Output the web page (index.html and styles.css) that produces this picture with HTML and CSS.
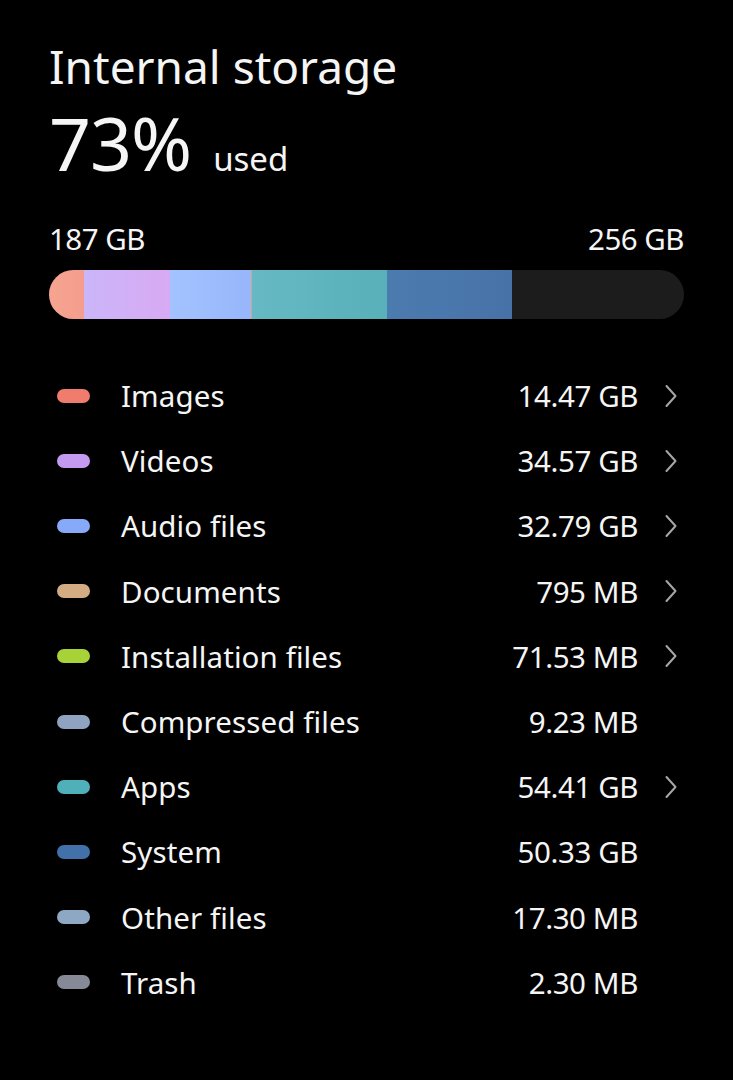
FILE: index.html
```html
<!DOCTYPE html>
<html>
<head>
<meta charset="utf-8">
<link rel="stylesheet" href="styles.css">
</head>
<body>
<div class="page">
  <h1 class="title">Internal storage</h1>
  <div class="usage"><span class="pct">73%</span><span class="used">used</span></div>
  <div class="caps"><span>187 GB</span><span>256 GB</span></div>
  <div class="bar">
    <div class="seg s-img"></div>
    <div class="seg s-vid"></div>
    <div class="seg s-aud"></div>
    <div class="seg s-doc"></div>
    <div class="seg s-app"></div>
    <div class="seg s-sys"></div>
  </div>
  <ul class="list">
    <li class="row"><span class="dot d-img"></span><span class="label">Images</span><span class="val">14.47 GB</span><span class="chev"><svg viewBox="0 0 12 24" width="12" height="24"><path d="M1.5 2 L10.5 12 L1.5 22" /></svg></span></li>
    <li class="row"><span class="dot d-vid"></span><span class="label">Videos</span><span class="val">34.57 GB</span><span class="chev"><svg viewBox="0 0 12 24" width="12" height="24"><path d="M1.5 2 L10.5 12 L1.5 22" /></svg></span></li>
    <li class="row"><span class="dot d-aud"></span><span class="label">Audio files</span><span class="val">32.79 GB</span><span class="chev"><svg viewBox="0 0 12 24" width="12" height="24"><path d="M1.5 2 L10.5 12 L1.5 22" /></svg></span></li>
    <li class="row"><span class="dot d-doc"></span><span class="label">Documents</span><span class="val">795 MB</span><span class="chev"><svg viewBox="0 0 12 24" width="12" height="24"><path d="M1.5 2 L10.5 12 L1.5 22" /></svg></span></li>
    <li class="row"><span class="dot d-ins"></span><span class="label">Installation files</span><span class="val">71.53 MB</span><span class="chev"><svg viewBox="0 0 12 24" width="12" height="24"><path d="M1.5 2 L10.5 12 L1.5 22" /></svg></span></li>
    <li class="row"><span class="dot d-cmp"></span><span class="label">Compressed files</span><span class="val">9.23 MB</span><span class="chev"></span></li>
    <li class="row"><span class="dot d-app"></span><span class="label">Apps</span><span class="val">54.41 GB</span><span class="chev"><svg viewBox="0 0 12 24" width="12" height="24"><path d="M1.5 2 L10.5 12 L1.5 22" /></svg></span></li>
    <li class="row"><span class="dot d-sys"></span><span class="label">System</span><span class="val">50.33 GB</span><span class="chev"></span></li>
    <li class="row"><span class="dot d-oth"></span><span class="label">Other files</span><span class="val">17.30 MB</span><span class="chev"></span></li>
    <li class="row"><span class="dot d-tr"></span><span class="label">Trash</span><span class="val">2.30 MB</span><span class="chev"></span></li>
  </ul>
</div>
</body>
</html>
```

FILE: styles.css
```css
html, body {
  margin: 0;
  padding: 0;
  background: #000;
}
body {
  font-family: "Noto Sans", "Open Sans", sans-serif;
  color: #f5f5f5;
  width: 733px;
  height: 1080px;
  overflow: hidden;
}
.page {
  padding: 36px 49px 0 49px;
}
.title {
  margin: 0;
  font-weight: 400;
  font-size: 46px;
  line-height: 60px;
  letter-spacing: 0;
}
.usage {
  display: flex;
  align-items: baseline;
  margin-top: 5px;
  height: 84px;
}
.pct {
  font-size: 73.5px;
  line-height: 84px;
  font-weight: 400;
  letter-spacing: -1px;
}
.used {
  font-size: 33px;
  margin-left: 22px;
}
.caps {
  display: flex;
  justify-content: space-between;
  font-size: 29.5px;
  line-height: 36px;
  margin-top: 36px;
  letter-spacing: -0.5px;
}
.bar {
  display: flex;
  height: 49px;
  margin-top: 13px;
  border-radius: 25px;
  overflow: hidden;
  background: #1c1c1c;
  width: 635px;
}
.seg { height: 100%; }
.s-img { width: 35px; background: linear-gradient(90deg, #f6a491, #f59d8c); }
.s-vid { width: 86px; background: linear-gradient(90deg, #cbb5f9, #d8aaf3); }
.s-aud { width: 81px; background: linear-gradient(90deg, #a3c3ff, #97b6fb); }
.s-doc { width: 1px; background: #c9ab8a; }
.s-app { width: 135px; background: linear-gradient(90deg, #66b9c2, #58b0b9); }
.s-sys { width: 125px; background: linear-gradient(90deg, #4c7bb0, #4772a8); }

.list {
  list-style: none;
  margin: 44px 0 0 0;
  padding: 0;
}
.row {
  display: flex;
  align-items: center;
  height: 65.2px;
}
.dot {
  width: 33px;
  height: 14px;
  border-radius: 7px;
  margin-left: 8px;
  flex: none;
}
.label {
  margin-left: 31px;
  font-size: 29.5px;
  flex: 1;
  letter-spacing: 0.1px;
}
.val {
  font-size: 29.5px;
  letter-spacing: -0.4px;
}
.chev {
  width: 46px;
  display: flex;
  justify-content: flex-end;
  flex: none;
}
.chev svg {
  margin-right: 7px;
}
.chev path {
  fill: none;
  stroke: #a6a6a6;
  stroke-width: 2;
  stroke-linecap: round;
  stroke-linejoin: round;
}
.d-img { background: #ef7c6c; }
.d-vid { background: #c49af0; }
.d-aud { background: #86a9f9; }
.d-doc { background: #d4ac84; }
.d-ins { background: #a8d338; }
.d-cmp { background: #8fa3c0; }
.d-app { background: #4fb0ba; }
.d-sys { background: #4270a8; }
.d-oth { background: #8ea8c4; }
.d-tr { background: #868a96; }
```
